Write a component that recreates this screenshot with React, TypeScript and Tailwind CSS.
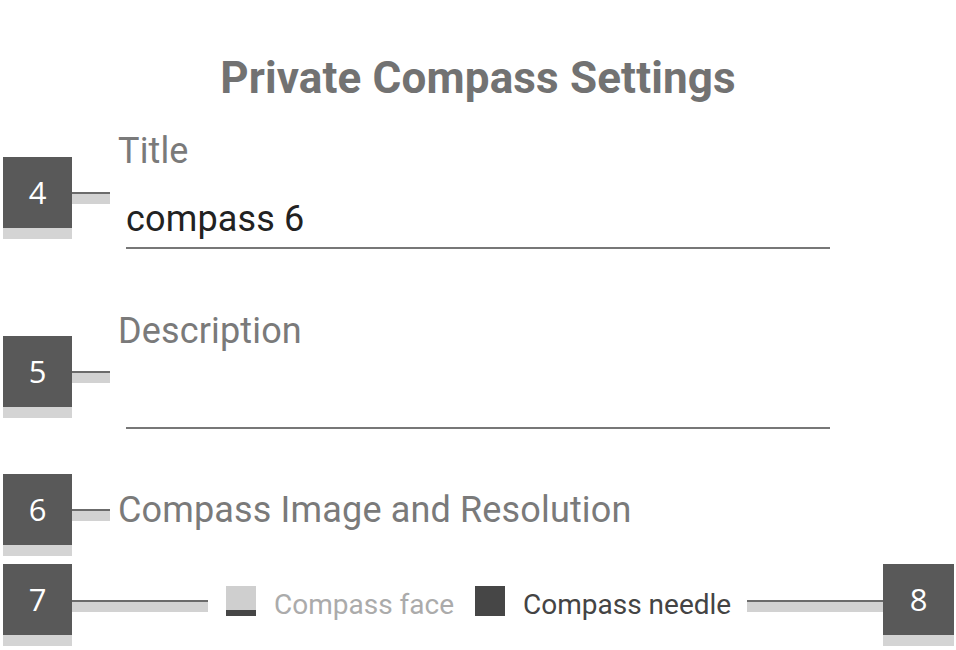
import React from 'react';

function Badge({ n, wide = false }: { n: string; wide?: boolean }) {
  return (
    <div className={`${wide ? 'w-[71px]' : 'w-[69px]'} shrink-0 flex flex-col`}>
      <div className="h-[71px] bg-[#595959] flex items-center justify-center text-white text-[31px] leading-none font-['Open_Sans',sans-serif]">
        {n}
      </div>
      <div className="h-[11px] bg-[#d4d4d4]" />
    </div>
  );
}

function Connector({ className }: { className: string }) {
  return (
    <div className={`h-[12px] flex flex-col ${className}`}>
      <div className="h-[2px] bg-[#6b6b6b]" />
      <div className="flex-1 bg-[#d2d2d2]" />
    </div>
  );
}

export default function App() {
  return (
    <div className="w-[956px] h-[650px] bg-white overflow-hidden font-['Roboto',sans-serif]">
      {/* Header */}
      <h1 className="pt-[56px] text-[44px] leading-none font-bold tracking-[0.15px] text-center text-[#727272]">
        Private Compass Settings
      </h1>

      {/* Title field */}
      <div className="flex items-start mt-[33px]">
        <div className="flex items-start ml-[3px] mt-[24px]">
          <Badge n="4" />
          <Connector className="w-[38px] mt-[35px]" />
        </div>
        <div className="ml-[8px]">
          <div className="text-[36px] leading-none tracking-[0.15px] text-[#7a7a7a]">Title</div>
          <div className="ml-2 w-[704px] mt-[32px] pb-[10px] border-b-2 border-[#777777]">
            <div className="text-[36px] leading-none tracking-[0.15px] text-[#222222]">compass 6</div>
          </div>
        </div>
      </div>

      {/* Description field */}
      <div className="flex items-start mt-[64px]">
        <div className="flex items-start ml-[3px] mt-[23px]">
          <Badge n="5" />
          <Connector className="w-[38px] mt-[35px]" />
        </div>
        <div className="ml-[8px]">
          <div className="text-[36px] leading-none tracking-[0.15px] text-[#7a7a7a]">Description</div>
          <div className="ml-2 w-[704px] h-[80px] border-b-2 border-[#777777]" />
        </div>
      </div>

      {/* Compass image */}
      <div className="flex items-start mt-[45px]">
        <div className="flex items-start ml-[3px]">
          <Badge n="6" />
          <Connector className="w-[38px] mt-[35px]" />
        </div>
        <div className="ml-[8px] mt-[18px] text-[36px] leading-none tracking-[0.15px] text-[#7a7a7a]">
          Compass Image and Resolution
        </div>
      </div>

      {/* Colour row */}
      <div className="flex items-start mt-[8px]">
        <div className="ml-[3px]">
          <Badge n="7" />
        </div>
        <Connector className="w-[136px] mt-[36px]" />
        <div className="ml-[18px] mt-[22px] w-[30px] h-[30px] flex flex-col">
          <div className="flex-1 bg-[#cfcfcf]" />
          <div className="h-[6px] bg-[#464646]" />
        </div>
        <div className="ml-[18px] mt-[27px] text-[28px] leading-none text-[#ababab]">Compass face</div>
        <div className="ml-[21px] mt-[22px] w-[30px] h-[30px] bg-[#464646]" />
        <div className="ml-[18px] mt-[27px] text-[28px] leading-none text-[#444444]">Compass needle</div>
        <Connector className="flex-1 ml-[16px] mt-[36px]" />
        <div className="mr-[2px]">
          <Badge n="8" wide />
        </div>
      </div>
    </div>
  );
}
